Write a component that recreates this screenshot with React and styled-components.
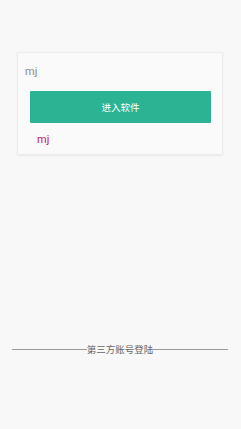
import React from "react";
import styled, { createGlobalStyle } from "styled-components";

const Global = createGlobalStyle`
  html, body { margin: 0; padding: 0; background: #f8f8f8; }
  body { font-family: Roboto, "Noto Sans CJK SC", "Noto Sans", sans-serif; }
`;

const Page = styled.div`
  width: 241px;
  height: 429px;
  display: flex;
  flex-direction: column;
  padding-top: 52px;
  box-sizing: border-box;
`;

const Card = styled.div`
  margin: 0 18px 0 17px;
  height: 103px;
  box-sizing: border-box;
  background: #fafafa;
  border: 1px solid #ececec;
  box-shadow: 0 1px 2px rgba(0,0,0,0.06);
  display: flex;
  flex-direction: column;
  padding: 10px 0 0 7px;
`;

const InputText = styled.div`
  height: 18px;
  font-size: 11px;
  color: #8a8a8a;
  line-height: 18px;
`;

const Button = styled.div`
  margin: 10px 11px 0 5px;
  height: 32px;
  background: #2bb393;
  color: #fff;
  font-size: 9.5px;
  display: flex;
  align-items: center;
  justify-content: center;
  border-radius: 1px;
`;

const Name = styled.div`
  margin: 10px 0 0 12px;
  font-size: 11px;
  color: #c2185b;
`;

const Divider = styled.div`
  margin: 187px 13px 0 12px;
  display: flex;
  align-items: center;
  font-size: 9.5px;
  color: #666;
  &::before, &::after {
    content: "";
    flex: 1;
    height: 1px;
    background: #9a9a9a;
  }
`;

export default function App() {
  return (
    <Page>
      <Global />
      <Card>
        <InputText>mj</InputText>
        <Button>进入软件</Button>
        <Name>mj</Name>
      </Card>
      <Divider>第三方账号登陆</Divider>
    </Page>
  );
}
